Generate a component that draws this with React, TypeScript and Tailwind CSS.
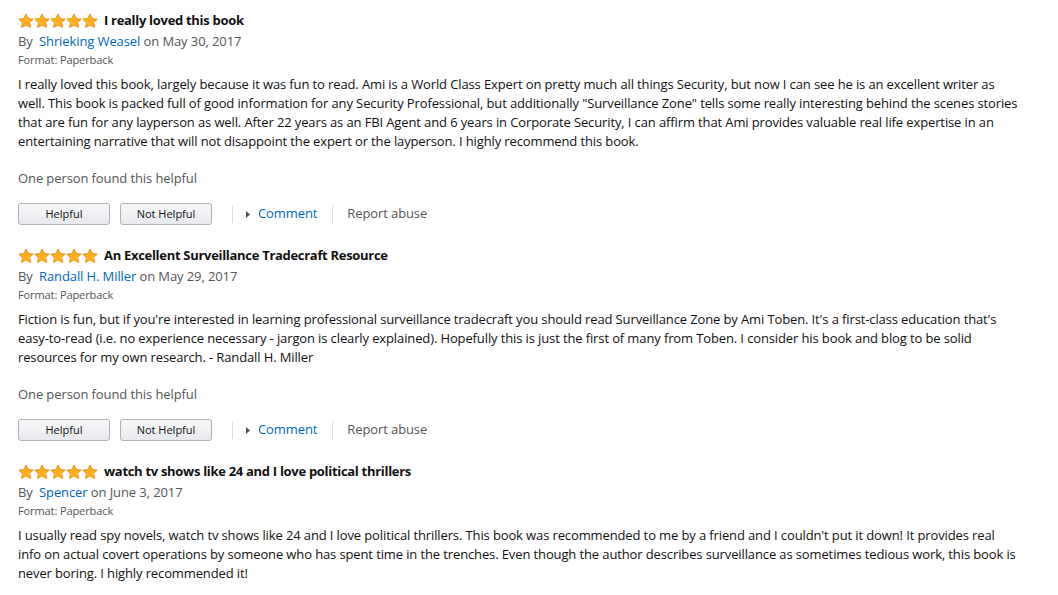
import React from "react";

type Review = {
  title: string;
  author: string;
  date: string;
  lines: string[];
  helpful?: boolean;
};

const REVIEWS: Review[] = [
  {
    title: "I really loved this book",
    author: "Shrieking Weasel",
    date: "May 30, 2017",
    lines: [
      "I really loved this book, largely because it was fun to read. Ami is a World Class Expert on pretty much all things Security, but now I can see he is an excellent writer as",
      'well. This book is packed full of good information for any Security Professional, but additionally "Surveillance Zone" tells some really interesting behind the scenes stories',
      "that are fun for any layperson as well. After 22 years as an FBI Agent and 6 years in Corporate Security, I can affirm that Ami provides valuable real life expertise in an",
      "entertaining narrative that will not disappoint the expert or the layperson. I highly recommend this book.",
    ],
    helpful: true,
  },
  {
    title: "An Excellent Surveillance Tradecraft Resource",
    author: "Randall H. Miller",
    date: "May 29, 2017",
    lines: [
      "Fiction is fun, but if you're interested in learning professional surveillance tradecraft you should read Surveillance Zone by Ami Toben. It's a first-class education that's",
      "easy-to-read (i.e. no experience necessary - jargon is clearly explained). Hopefully this is just the first of many from Toben. I consider his book and blog to be solid",
      "resources for my own research. - Randall H. Miller",
    ],
    helpful: true,
  },
  {
    title: "watch tv shows like 24 and I love political thrillers",
    author: "Spencer",
    date: "June 3, 2017",
    lines: [
      "I usually read spy novels, watch tv shows like 24 and I love political thrillers. This book was recommended to me by a friend and I couldn't put it down! It provides real",
      "info on actual covert operations by someone who has spent time in the trenches. Even though the author describes surveillance as sometimes tedious work, this book is",
      "never boring. I highly recommended it!",
    ],
  },
];

function Star() {
  return (
    <svg width="16" height="16" viewBox="0 0 24 23" aria-hidden="true">
      <path
        d="M12 1l3.3 6.8 7.5.9-5.5 5.2 1.5 7.4L12 17.6l-6.8 3.7 1.5-7.4-5.5-5.2 7.5-.9z"
        fill="#ffb21d"
        stroke="#e38a14"
        strokeWidth="1.3"
        strokeLinejoin="round"
      />
    </svg>
  );
}

function Stars() {
  return (
    <span className="flex items-center">
      {[0, 1, 2, 3, 4].map((i) => (
        <Star key={i} />
      ))}
    </span>
  );
}

function VoteButton({ label, className = "" }: { label: string; className?: string }) {
  return (
    <button
      type="button"
      className={`block h-[22px] w-[92px] rounded-[3px] border border-[#adb1b8] bg-gradient-to-b from-[#f7f8fa] to-[#e7e9ec] text-[11px] leading-[20px] text-[#111] ${className}`}
    >
      {label}
    </button>
  );
}

function ReviewItem({ review }: { review: Review }) {
  return (
    <div className="flex flex-col">
      <div className="flex h-5 items-center gap-[6px]">
        <Stars />
        <span className="text-[13px] font-bold tracking-[-0.3px] text-[#111]">{review.title}</span>
      </div>
      <div className="h-5 text-[13px] leading-5 tracking-[-0.1px] text-[#555]">
        By <span className="ml-[3px] text-[#0066c0]">{review.author}</span> on {review.date}
      </div>
      <div className="h-[18px] text-[11px] leading-[18px] tracking-[-0.1px] text-[#555]">Format: Paperback</div>
      <div className="mt-[6px] text-[13px] leading-[19px] tracking-[-0.12px] text-[#111]">
        {review.lines.map((line, i) => (
          <div key={i} className="whitespace-nowrap">
            {line}
          </div>
        ))}
      </div>
      {review.helpful && (
        <>
          <div className="mt-[18px] text-[13px] leading-[19px] tracking-[-0.1px] text-[#555]">
            One person found this helpful
          </div>
          <div className="mt-[15px] flex h-[22px] items-center">
            <VoteButton label="Helpful" />
            <VoteButton label="Not Helpful" className="ml-[10px]" />
            <span className="ml-[20px] h-[18px] w-px bg-[#ddd]" />
            <span className="ml-[13px] flex items-center text-[13px] tracking-[-0.1px] text-[#0066c0]">
              <svg width="4" height="7" viewBox="0 0 4 7" className="mr-[8px]" aria-hidden="true">
                <path d="M0 0L4 3.5L0 7z" fill="#555" />
              </svg>
              Comment
            </span>
            <span className="ml-[15px] h-[18px] w-px bg-[#ddd]" />
            <span className="ml-[14px] text-[13px] tracking-[-0.1px] text-[#555]">Report abuse</span>
          </div>
        </>
      )}
    </div>
  );
}

export default function App() {
  return (
    <div
      className="h-[595px] w-[1058px] overflow-hidden bg-white px-[18px] pt-[11px]"
      style={{ fontFamily: '"Open Sans", "Noto Sans", Arial, sans-serif' }}
    >
      <div className="flex flex-col gap-[21px]">
        {REVIEWS.map((r) => (
          <ReviewItem key={r.title} review={r} />
        ))}
      </div>
    </div>
  );
}
